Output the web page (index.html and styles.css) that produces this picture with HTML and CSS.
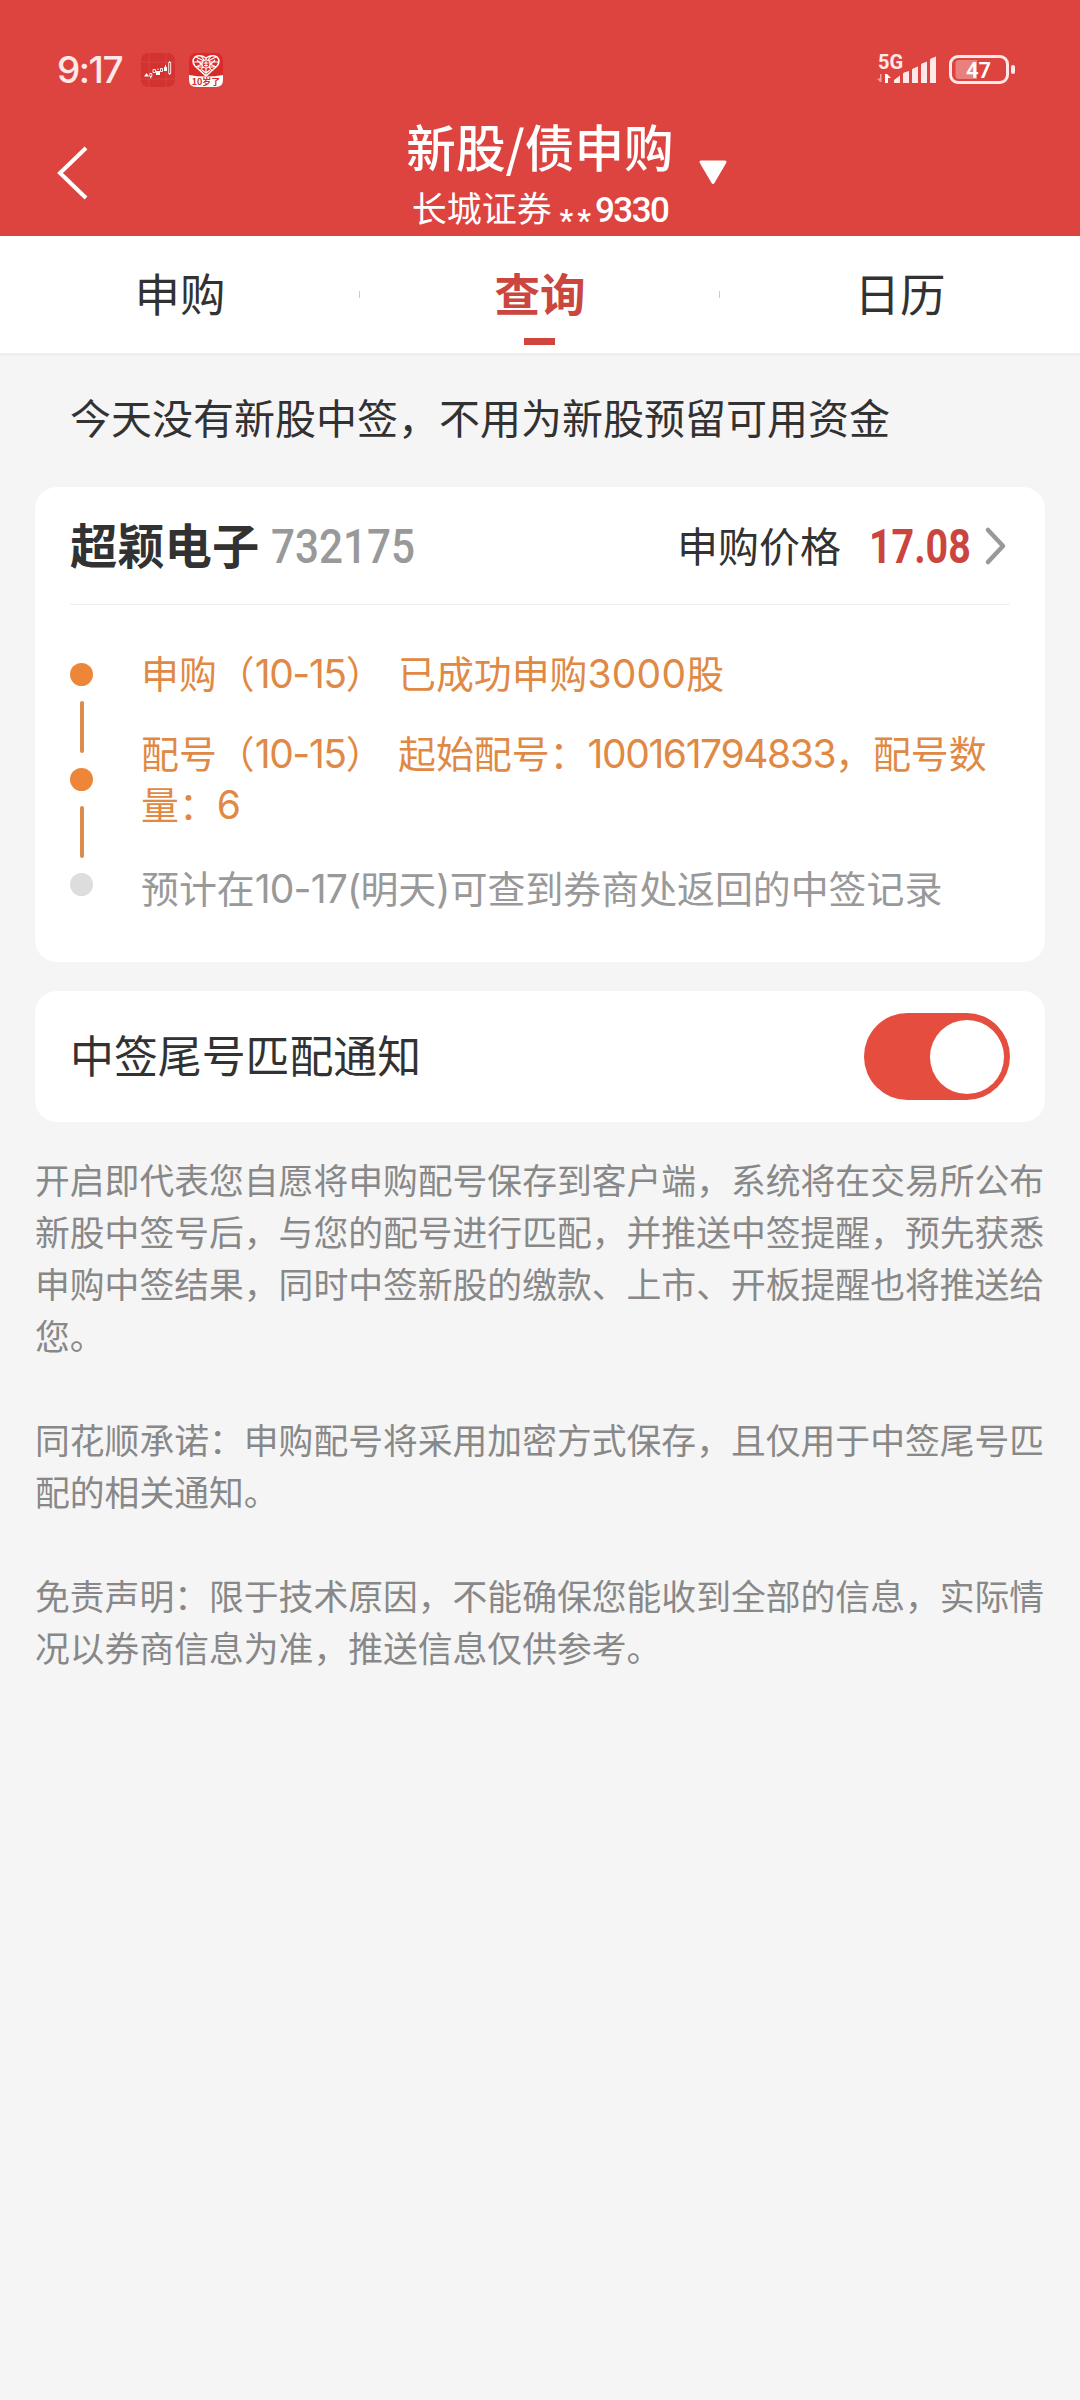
FILE: index.html
```html
<!DOCTYPE html>
<html lang="zh-CN">
<head>
    <meta charset="UTF-8">
    <meta name="viewport" content="width=device-width, initial-scale=1.0">
    <title>新股/债申购</title>
    <link rel="stylesheet" href="styles.css">
</head>
<body>
    <header class="top">
        <div class="status-bar">
            <div class="status-left">
                <span class="time">9:17</span>
                <svg class="app-icon" viewBox="0 0 34 34">
                    <rect width="34" height="34" rx="7" fill="#d23230"/>
                    <path d="M0 9H34M0 26H34M8 0V34M25 0V34" stroke="#dc504b" stroke-width=".6"/>
                    <path d="M3 23.5L5.5 20L8 23.5ZM15 18h4v4h-4zM23 14h3v4h-3z" fill="#fff"/>
                    <path d="M8.8 20.5h2v3h-2zM12 16.5h2.5v3h-2.5zM19.5 15.5h2v3h-2zM27.7 9.5h2v11h-2zM9.8 23.5v2M17 17v-1.5M24.5 14v-2M28.7 9.5v-1.5M28.7 20.5v1.5" fill="none" stroke="#fff" stroke-width=".9"/>
                </svg>
                <svg class="app-icon" viewBox="0 0 34 34">
                    <rect width="34" height="34" rx="7" fill="#d92b27"/>
                    <path d="M0 22Q17 25 34 22V27Q34 34 27 34H7Q0 34 0 27Z" fill="#fff"/>
                    <path d="M17 23L6 13Q2 8 6 4Q11 1 17 5Q23 1 28 4Q32 8 28 13Z" fill="none" stroke="#fff" stroke-width="1.5"/>
                    <path d="M7 4L27 14M27 4L7 14M12 3L23 18M22 3L11 18M4 9H30M9 14H25M17 5V9M17 14V23M8 7L13 12M26 7L21 12M13 17L17 20L21 17" stroke="#fff" stroke-width="1.2" fill="none"/>
                    <circle cx="17" cy="11" r="4" fill="#d92b27" stroke="#fff" stroke-width="1.2"/>
                    <path d="M14.5 10H19.5M17 8V14M15 12.5H19" stroke="#fff" stroke-width="1"/>
                    <text x="17" y="31.5" text-anchor="middle" class="app-text">10岁了</text>
                </svg>
            </div>
            <div class="status-right">
                <svg class="signal" viewBox="0 0 60 34">
                    <text x="1" y="15.5" class="net-text">5G</text>
                    <path d="M4.5 21V29H3L0 25.5H3V21Z" fill="#fff" opacity=".5"/>
                    <path d="M8 30V21H10L14 25H11V30Z" fill="#fff"/>
                    <path d="M17 30V27L23 22.5V30ZM26 30V21Q26 20 27 19.5L32 18V30ZM35 30V17Q35 16 36 15.5L41 13.5V30ZM44 30V12Q44 11 45 10.5L50 8.5V30ZM53 30V7Q53 6 54 5.5L59 3.5V30Z" fill="#ffe9e8"/>
                </svg>
                <svg class="battery" viewBox="0 0 68 30">
                    <rect x="1.5" y="1.5" width="57" height="26" rx="7.5" fill="none" stroke="#ffe9e8" stroke-width="3"/>
                    <path d="M10 5H28V24H10Q6.5 24 6.5 20.5V8.5Q6.5 5 10 5Z" fill="#e9807c"/>
                    <rect x="62" y="10" width="4" height="9" rx="2" fill="#ffe9e8"/>
                    <text x="29.5" y="22.5" text-anchor="middle" class="battery-text">47</text>
                </svg>
            </div>
        </div>
        <div class="nav">
            <svg class="back" viewBox="0 0 32 54"><path d="M29 2L3 27L29 52" fill="none" stroke="#fff" stroke-width="4"/></svg>
            <div class="nav-title">
                <h1>新股/债申购</h1>
                <p>长城证券 <span class="stars">**</span><span class="account">9330</span></p>
            </div>
            <svg class="arrow" viewBox="0 0 30 25"><path d="M3 2H27L15 22.5Z" fill="#fff" stroke="#fff" stroke-width="3" stroke-linejoin="round"/></svg>
        </div>
    </header>

    <nav class="tabs">
        <a class="tab">申购</a>
        <a class="tab active">查询</a>
        <a class="tab">日历</a>
    </nav>

    <main>
        <p class="notice">今天没有新股中签，不用为新股预留可用资金</p>

        <section class="card stock">
            <div class="stock-head">
                <span class="name">超颖电子</span>
                <span class="code">732175</span>
                <span class="price-label">申购价格</span>
                <span class="price">17.08</span>
                <svg class="more" viewBox="0 0 22 38"><path d="M3 3L18 19L3 35" fill="none" stroke="#999" stroke-width="4.5" stroke-linecap="round" stroke-linejoin="round"/></svg>
            </div>
            <div class="timeline">
                <div class="track">
                    <i class="dot"></i>
                    <i class="line"></i>
                    <i class="dot"></i>
                    <i class="line"></i>
                    <i class="dot gray"></i>
                </div>
                <div class="steps">
                    <p>申购（<span class="num">10-15</span>） 已成功申购<span class="num wide">3000</span>股</p>
                    <p>配号（<span class="num">10-15</span>） 起始配号：<span class="num">100161794833</span>，配号数量：<span class="num">6</span></p>
                    <p class="pending">预计在<span class="num">10-17(</span>明天<span class="num">)</span>可查到券商处返回的中签记录</p>
                </div>
            </div>
        </section>

        <section class="card notify">
            <span class="notify-label">中签尾号匹配通知</span>
            <span class="switch"><i></i></span>
        </section>

        <div class="desc">
            <p>开启即代表您自愿将申购配号保存到客户端，系统将在交易所公布新股中签号后，与您的配号进行匹配，并推送中签提醒，预先获悉申购中签结果，同时中签新股的缴款、上市、开板提醒也将推送给您。</p>
            <p>同花顺承诺：申购配号将采用加密方式保存，且仅用于中签尾号匹配的相关通知。</p>
            <p>免责声明：限于技术原因，不能确保您能收到全部的信息，实际情况以券商信息为准，推送信息仅供参考。</p>
        </div>
    </main>
</body>
</html>
```
FILE: styles.css
```css
* {
    box-sizing: border-box;
}

body {
    margin: 0;
    min-height: 100vh;
    background: #f5f5f5;
    color: #323232;
    font-family: "Noto Sans CJK SC", sans-serif;
    text-spacing-trim: space-all;
}

h1, p {
    margin: 0;
    font-weight: normal;
}

svg {
    display: block;
    flex: none;
    overflow: visible;
}

.top {
    height: 236px;
    background: #dd4440;
    color: #fff;
}

.status-bar {
    display: flex;
    justify-content: space-between;
    height: 106px;
    padding: 50px 63px 0 57px;
}

.status-left, .status-right {
    display: flex;
    align-items: center;
    height: 40px;
}

.time {
    width: 84px;
    font: 500 37px/40px Inter, sans-serif;
    letter-spacing: -1.5px;
    color: #ffe9e8;
}

.app-icon {
    width: 34px;
    height: 34px;
    margin-right: 14px;
}

.app-text {
    font: bold 9px "Noto Sans CJK SC", sans-serif;
    fill: #d92b27;
}

.signal {
    width: 60px;
    height: 34px;
    margin-right: 12px;
}

.net-text {
    font: 700 20px Roboto, sans-serif;
    fill: #ffe9e8;
}

.battery {
    width: 68px;
    height: 30px;
}

.battery-text {
    font: 600 22px Roboto, sans-serif;
    fill: #fff;
}

.nav {
    display: flex;
    height: 130px;
    padding-left: 57px;
}

.back {
    width: 32px;
    height: 54px;
    margin-top: 40px;
}

.nav-title {
    width: 270px;
    margin-left: 316px;
    white-space: nowrap;
    text-align: center;
}

.nav-title h1 {
    margin-top: 4px;
    font-size: 49.6px;
    font-weight: 500;
    line-height: 70px;
}

.nav-title p {
    margin-top: 2px;
    font-size: 35px;
    line-height: 50px;
}

.stars {
    font-family: Roboto, sans-serif;
    font-size: 31px;
    font-weight: 500;
    line-height: 1;
    letter-spacing: 4px;
    vertical-align: -9px;
}

.account {
    font-family: Roboto, sans-serif;
    font-weight: 500;
    letter-spacing: -1.6px;
}

.arrow {
    width: 30px;
    height: 25px;
    margin: 54px 0 0 23px;
}

.tabs {
    display: flex;
    height: 120px;
    background: #fff;
    border-bottom: 3px solid #eee;
}

.tab {
    position: relative;
    flex: 1;
    text-align: center;
    font-size: 45.5px;
    line-height: 113px;
}

.tab + .tab::before {
    content: "";
    position: absolute;
    left: -1px;
    top: 55px;
    width: 1px;
    height: 7px;
    background: #ccc;
}

.tab.active {
    color: #cb463f;
    font-weight: bold;
}

.tab.active::after {
    content: "";
    position: absolute;
    left: 164px;
    bottom: 8px;
    width: 31px;
    height: 7px;
    background: #d0453e;
}

main {
    padding: 0 35px;
}

.notice {
    height: 131px;
    padding: 30px 35px 0;
    font-size: 41px;
    line-height: 60px;
}

.card {
    background: #fff;
    border-radius: 22px;
    padding: 0 35px;
}

.stock {
    height: 475px;
}

.stock-head {
    display: flex;
    align-items: center;
    height: 118px;
    border-bottom: 1px solid #eee;
}

.name {
    margin-top: -4px;
    font-size: 47.3px;
    font-weight: bold;
}

/* digits are condensed to look like the DIN face */
.code {
    width: 158px;
    margin: 2px 0 0 12px;
    color: #999;
    font: 500 48px Roboto, sans-serif;
    transform: scaleX(0.88);
    transform-origin: left;
}

.price-label {
    margin: -4px 0 0 auto;
    font-size: 41px;
}

.price {
    width: 103px;
    margin: 2px 13px 0 28px;
    color: #c9453e;
    font: 700 48px Roboto, sans-serif;
    transform: scaleX(0.82);
    transform-origin: left;
}

.more {
    width: 22px;
    height: 38px;
    margin-right: 3px;
}

.timeline {
    display: flex;
}

.track {
    display: flex;
    flex-direction: column;
    align-items: center;
    justify-content: space-between;
    width: 23px;
    height: 233px;
    margin-top: 58px;
}

.dot {
    width: 23px;
    height: 23px;
    border-radius: 50%;
    background: #ee8639;
}

.dot.gray {
    background: #ddd;
}

.line {
    width: 4px;
    height: 52px;
    border-radius: 2px;
    background: #db8c4d;
}

.steps {
    flex: 1;
    margin: 41px 0 0 48px;
    color: #df8945;
    font-size: 37.9px;
    line-height: 51.5px;
    word-spacing: 6px;
}

.steps p {
    margin-bottom: 28px;
}

.steps p + p {
    margin-bottom: 32px;
}

.steps .pending {
    color: #999;
}

.num {
    font-family: Inter, sans-serif;
    font-size: 39px;
    line-height: 1;
    letter-spacing: -1.4px;
}

.num.wide {
    letter-spacing: 0.2px;
}

.pending .num {
    letter-spacing: -0.8px;
}

.notify {
    display: flex;
    align-items: center;
    justify-content: space-between;
    height: 131px;
    margin-top: 29px;
    font-size: 43.9px;
}

.notify-label {
    margin-top: -5px;
}

.switch {
    display: flex;
    align-items: center;
    justify-content: flex-end;
    width: 146px;
    height: 87px;
    padding-right: 6px;
    border-radius: 44px;
    background: #e54d3e;
}

.switch i {
    width: 74px;
    height: 74px;
    border-radius: 50%;
    background: #fff;
}

.desc {
    margin-top: 31px;
    color: #888;
    font-size: 34.8px;
    line-height: 52px;
}

.desc p {
    margin-bottom: 52px;
}
```
